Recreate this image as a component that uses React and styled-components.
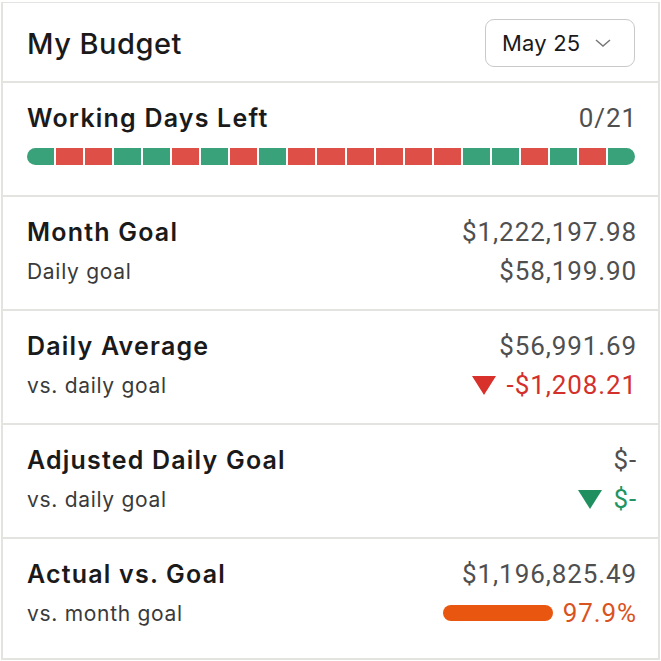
import React from "react";
import styled, { createGlobalStyle } from "styled-components";

const GlobalStyle = createGlobalStyle`
  html, body {
    margin: 0;
    padding: 0;
    background: #fff;
  }
  body {
    font-family: "Inter", "Noto Sans", sans-serif;
  }
`;

const days = "grrggrgrgrrrrrrggrgrg".split("");

const Page = styled.div`
  padding: 2px 1px 0 1px;
`;

const Card = styled.div`
  width: 659px;
  height: 658px;
  box-sizing: border-box;
  border: 2px solid #e3e3df;
  border-top-width: 1px;
  display: flex;
  flex-direction: column;
  background: #fff;
`;

const Header = styled.div`
  height: 80px;
  flex: none;
  box-sizing: border-box;
  display: flex;
  align-items: center;
  justify-content: space-between;
  padding: 2px 23px 0 24px;
  border-bottom: 2px solid #e3e3df;
`;

const Title = styled.h1`
  margin: 0;
  font-size: 29px;
  font-weight: 500;
  color: #1a1a1a;
  letter-spacing: 0.5px;
`;

const Select = styled.button`
  display: flex;
  align-items: center;
  gap: 14px;
  height: 48px;
  width: 150px;
  padding: 0 0 0 16px;
  border: 1.5px solid #c9c9c9;
  border-radius: 9px;
  background: #fff;
  font-family: "Inter", sans-serif;
  font-size: 22px;
  color: #1a1a1a;
  letter-spacing: 0.2px;
`;

const Section = styled.div`
  flex: ${(p) => (p.$last ? 1 : "none")};
  height: ${(p) => (p.$last ? "auto" : "114px")};
  box-sizing: border-box;
  padding: 20px 21px 0 24px;
  border-bottom: ${(p) => (p.$last ? "none" : "2px solid #e3e3df")};
  display: flex;
  flex-direction: column;
  gap: 9px;
`;

const Row = styled.div`
  display: flex;
  align-items: center;
  justify-content: space-between;
  height: 30px;
`;

const Label = styled.div`
  font-size: 25px;
  font-weight: 600;
  color: #1a1a1a;
  letter-spacing: 1.2px;
`;

const Sub = styled.div`
  font-size: 21px;
  color: #3a3a3a;
  letter-spacing: 0.7px;
`;

const Value = styled.div`
  display: flex;
  align-items: center;
  gap: 10px;
  font-family: "Roboto", sans-serif;
  font-size: 26px;
  letter-spacing: 0.9px;
  color: ${(p) => p.$color || "#4f4f4f"};
`;

const DayBar = styled.div`
  display: flex;
  gap: 2px;
  margin: 6px 2px 0 0;
  height: 17px;
  border-radius: 9px;
  overflow: hidden;
`;

const Day = styled.div`
  flex: 1;
  background: ${(p) => (p.$ok ? "#3aa27a" : "#de4f47")};
`;

const Progress = styled.div`
  width: 110px;
  height: 16px;
  border-radius: 8px;
  background: #e8560f;
`;

const Chevron = () => (
  <svg width="18" height="10" viewBox="0 0 18 10" fill="none" stroke="#777" strokeWidth="1.5">
    <path d="M2 2l7 6 7-6" />
  </svg>
);

const Down = ({ color }) => (
  <svg width="26" height="22" viewBox="0 0 26 22" style={{ flex: "none" }}>
    <path d="M1 2h24L13 21z" fill={color} />
  </svg>
);

export default function App() {
  return (
    <Page>
      <GlobalStyle />
      <Card>
        <Header>
          <Title>My Budget</Title>
          <Select>
            May 25 <Chevron />
          </Select>
        </Header>
        <Section>
          <Row>
            <Label>Working Days Left</Label>
            <Value>0/21</Value>
          </Row>
          <DayBar>
            {days.map((d, i) => (
              <Day key={i} $ok={d === "g"} />
            ))}
          </DayBar>
        </Section>
        <Section>
          <Row>
            <Label>Month Goal</Label>
            <Value>$1,222,197.98</Value>
          </Row>
          <Row>
            <Sub>Daily goal</Sub>
            <Value>$58,199.90</Value>
          </Row>
        </Section>
        <Section>
          <Row>
            <Label>Daily Average</Label>
            <Value>$56,991.69</Value>
          </Row>
          <Row>
            <Sub>vs. daily goal</Sub>
            <Value $color="#d3302b">
              <Down color="#d8302a" />
              -$1,208.21
            </Value>
          </Row>
        </Section>
        <Section>
          <Row>
            <Label>Adjusted Daily Goal</Label>
            <Value>$-</Value>
          </Row>
          <Row>
            <Sub>vs. daily goal</Sub>
            <Value $color="#1f9463">
              <Down color="#1f8f5f" />
              $-
            </Value>
          </Row>
        </Section>
        <Section $last>
          <Row>
            <Label>Actual vs. Goal</Label>
            <Value>$1,196,825.49</Value>
          </Row>
          <Row>
            <Sub>vs. month goal</Sub>
            <Value $color="#d9531e">
              <Progress />
              97.9%
            </Value>
          </Row>
        </Section>
      </Card>
    </Page>
  );
}
